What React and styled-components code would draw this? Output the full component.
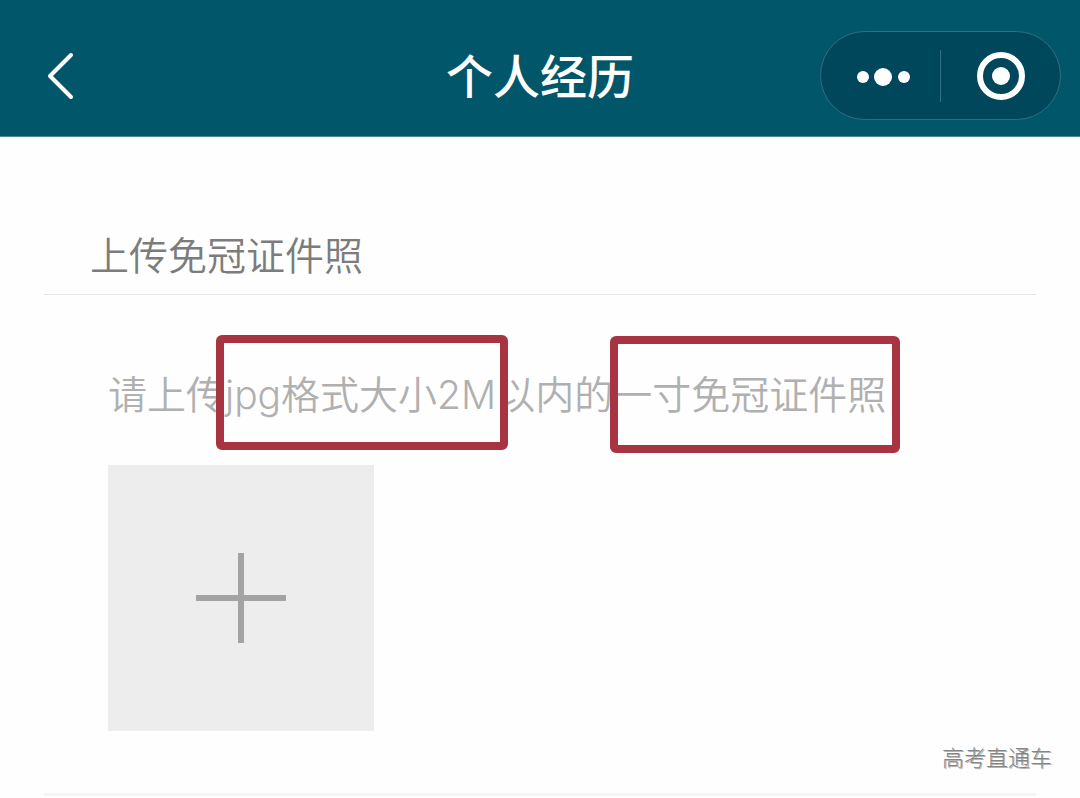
import React, { useRef } from 'react'
import styled, { createGlobalStyle } from 'styled-components'

const GlobalStyle = createGlobalStyle`
* {
  box-sizing: border-box;
}
body {
  margin: 0;
  background-color: #fefefe;
  font-family: Inter, "Noto Sans CJK SC", sans-serif;
}
`;

const Page = styled.div`
position: relative;
min-height: 100vh;
overflow: hidden;
`;

const Header = styled.header`
display: grid;
grid-template-columns: 1fr auto 1fr;
align-items: center;
padding: 31px 19px 16px;
background-color: #025669;
border-bottom: 1px solid #4a8996;
`;

const IconButton = styled.button`
display: flex;
align-items: center;
justify-content: center;
padding: 0;
border: none;
background: none;
color: #fff;
cursor: pointer;
`;

const BackButton = styled(IconButton)`
justify-self: start;
width: 82px;
height: 56px;
`;

const Title = styled.h1`
margin: 0;
padding-top: 2px;
color: #fff;
font-size: 47px;
font-weight: 500;
line-height: 64px;
`;

const Capsule = styled.div`
display: flex;
align-items: center;
justify-self: end;
width: 241px;
height: 89px;
border: 1px solid #2f6f7f;
border-radius: 45px;
background-color: #01475b;

${IconButton} {
  flex: 1;
  height: 100%;
}
`;

const Divider = styled.span`
width: 1px;
height: 52px;
background-color: #2f6f7f;
`;

const Section = styled.section`
margin: 0 44px;
padding-top: 91px;
border-bottom: 3px solid #f5f5f5;
`;

const SectionTitle = styled.h2`
margin: 0;
padding: 0 46px 10px;
border-bottom: 1px solid #e6e6e6;
color: #7c7c7c;
font-size: 39px;
font-weight: 350;
line-height: 56px;
`;

const SectionBody = styled.div`
padding: 72px 64px 62px;
`;

const Hint = styled.p`
position: relative;
margin: 0 0 42px;
color: #b0b0b0;
font-size: 39px;
font-weight: 350;
line-height: 56px;
white-space: nowrap;
`;

// red marker frame drawn over part of the hint
const Mark = styled.span`
position: absolute;
top: ${(props) => props.$top}px;
left: ${(props) => props.$left}px;
width: ${(props) => props.$width}px;
height: ${(props) => props.$height}px;
border: 8px solid #a83442;
border-radius: 6px;
`;

const UploadButton = styled.button`
display: flex;
align-items: center;
justify-content: center;
width: 266px;
height: 266px;
padding: 0;
border: none;
background-color: #ededed;
cursor: pointer;
`;

const Watermark = styled.span`
position: absolute;
right: 28px;
bottom: 24px;
color: #858585;
font-size: 22px;
font-weight: 300;
line-height: 32px;
text-shadow: 1px 1px 0 #b4b4b4;
`;

const BackIcon = () => (
  <svg width="40" height="56" viewBox="0 0 40 56" fill="none" stroke="currentColor" strokeWidth="4" strokeLinecap="round" strokeLinejoin="round">
    <path d="M31 7 L10 28 L31 49" />
  </svg>
)

const MoreIcon = () => (
  <svg width="60" height="20" viewBox="0 0 60 20" fill="currentColor">
    <circle cx="12" cy="11" r="6" />
    <circle cx="32" cy="11" r="9" />
    <circle cx="53" cy="11" r="6" />
  </svg>
)

const CloseIcon = () => (
  <svg width="50" height="50" viewBox="0 0 50 50">
    <circle cx="25" cy="25" r="21" fill="none" stroke="currentColor" strokeWidth="6" />
    <circle cx="25" cy="25" r="9" fill="currentColor" />
  </svg>
)

const PlusIcon = () => (
  <svg width="90" height="90" viewBox="0 0 90 90" fill="none" stroke="#a3a3a3" strokeWidth="6">
    <path d="M45 0 V90 M0 45 H90" />
  </svg>
)

const App = () => {
  const fileInput = useRef(null)

  return (
    <>
      <GlobalStyle />
      <Page>
        <Header>
          <BackButton type="button" aria-label="返回"><BackIcon /></BackButton>
          <Title>个人经历</Title>
          <Capsule>
            <IconButton type="button" aria-label="更多"><MoreIcon /></IconButton>
            <Divider />
            <IconButton type="button" aria-label="关闭"><CloseIcon /></IconButton>
          </Capsule>
        </Header>

        <Section>
          <SectionTitle>上传免冠证件照</SectionTitle>
          <SectionBody>
            <Hint>
              请上传jpg格式大小2M以内的一寸免冠证件照
              <Mark $top={-32} $left={108} $width={292} $height={115} />
              <Mark $top={-31} $left={502} $width={290} $height={117} />
            </Hint>
            <input ref={fileInput} type="file" accept="image/jpeg" aria-label="上传免冠证件照" hidden />
            <UploadButton type="button" aria-label="选择照片" onClick={() => fileInput.current.click()}>
              <PlusIcon />
            </UploadButton>
          </SectionBody>
        </Section>

        <Watermark>高考直通车</Watermark>
      </Page>
    </>
  );
}

export default App
